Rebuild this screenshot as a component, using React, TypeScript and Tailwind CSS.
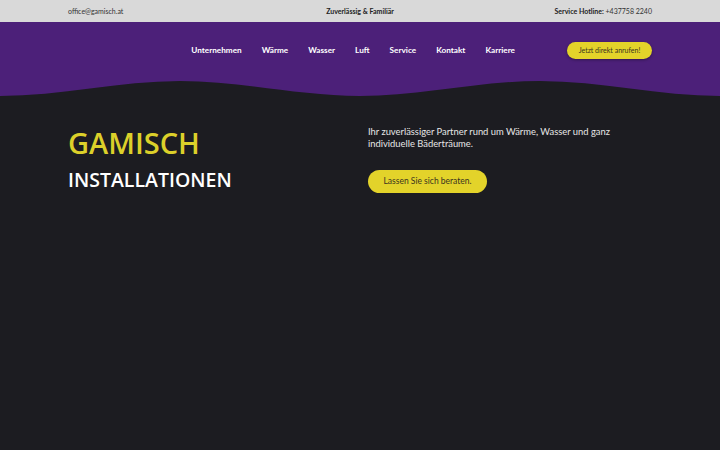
const nav = ["Unternehmen", "Wärme", "Wasser", "Luft", "Service", "Kontakt", "Karriere"];

export default function App() {
  return (
    <div className="min-h-[450px] bg-[#1c1c21] font-['Lato','Liberation_Sans',sans-serif]">
      {/* top bar */}
      <div className="bg-[#d9d9d9] h-[22px]">
        <div className="mx-auto w-[584px] h-full grid grid-cols-3 items-center text-[7px] text-[#333]">
          <span>office@gamisch.at</span>
          <span className="text-center font-bold text-[#222]">Zuverlässig &amp; Familiär</span>
          <span className="text-right">
            <b className="text-[#222]">Service Hotline:</b> +437758 2240
          </span>
        </div>
      </div>

      {/* header */}
      <div className="bg-[#4c2079] h-[58px]">
        <div className="mx-auto w-[584px] h-[57px] flex items-center">
          <nav className="ml-auto flex gap-5 text-[8.2px] font-bold text-white">
            {nav.map((n) => (
              <a key={n} href="#">{n}</a>
            ))}
          </nav>
          <a
            href="#"
            className="ml-[52px] w-[85px] h-[17px] rounded-full bg-[#e3d32a] text-[#3a3320] text-[7px] flex items-center justify-center shadow-[0_1px_3px_rgba(0,0,0,0.35)]"
          >
            Jetzt direkt anrufen!
          </a>
        </div>
      </div>
      <svg className="block w-full h-[17px]" viewBox="0 0 720 17" preserveAspectRatio="none">
        <path
          d="M0,0 H720 V16 C660,16 600,1 540,1 S420,16 360,16 S240,1 180,1 S60,16 0,16 Z"
          fill="#4c2079"
        />
      </svg>

      {/* hero */}
      <section className="mx-auto w-[584px] grid grid-cols-[300px_1fr] pt-[28px]">
        <div className="font-['Open_Sans','Liberation_Sans',sans-serif] font-semibold uppercase">
          <h1 className="text-[29px] leading-[36px] text-[#dcd02a]">Gamisch</h1>
          <h2 className="mt-[4px] text-[19.5px] leading-[30px] text-white">Installationen</h2>
        </div>
        <div>
          <p className="pt-[1px] text-[9.4px] leading-[12px] text-[#e6e6e6] max-w-[258px]">
            Ihr zuverlässiger Partner rund um Wärme, Wasser und ganz individuelle Bäderträume.
          </p>
          <a
            href="#"
            className="mt-[20px] w-[119px] h-[23px] rounded-full bg-[#e3d32a] text-[#3a3320] text-[8.5px] flex items-center justify-center"
          >
            Lassen Sie sich beraten.
          </a>
        </div>
      </section>
    </div>
  );
}
